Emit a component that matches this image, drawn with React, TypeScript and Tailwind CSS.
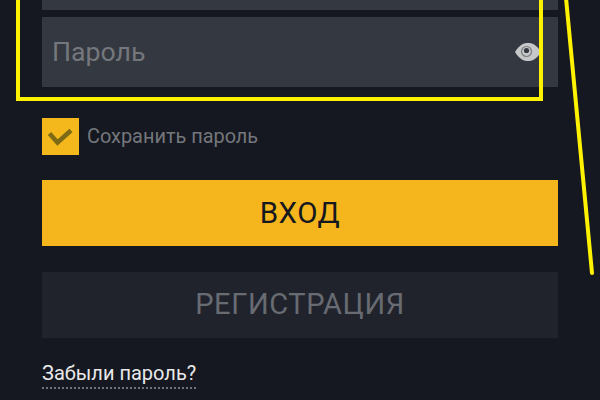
import React, { useState } from 'react';

export default function App() {
  const [remember, setRemember] = useState(true);

  return (
    <div className="relative h-[400px] w-[600px] overflow-hidden bg-[#151820] font-['Roboto',sans-serif]">
      <div className="flex flex-col pl-[42px] pr-[42px]">
        {/* login field, scrolled mostly out of view */}
        <div className="-mt-[60px] h-[70px] bg-[#343840]" />

        <div className="mt-[7px] flex h-[70px] items-center justify-between bg-[#343840] pl-[10px] pr-[16px]">
          <span className="text-[26.7px] text-[#74777c]">Пароль</span>
          <svg viewBox="0 0 28 20" className="h-[20px] w-[28px]">
            <path d="M1 10 C6 2 10 1 14 1 C18 1 22 2 27 10 C22 18 18 19 14 19 C10 19 6 18 1 10 Z" fill="#c6c7c9" />
            <circle cx="12.5" cy="9.5" r="5.6" fill="#7a7d81" />
            <circle cx="12.5" cy="9.5" r="4.4" fill="#c6c7c9" />
            <circle cx="12.5" cy="8.5" r="2.6" fill="#343840" />
          </svg>
        </div>

        <label className="mt-[31px] flex items-center gap-[8px]" onClick={() => setRemember(!remember)}>
          <span className="flex h-[37px] w-[37px] items-center justify-center bg-[#f5b81c]">
            {remember && (
              <svg viewBox="0 0 37 37" className="h-[37px] w-[37px]">
                <path d="M7.5 15.5 L15.5 24.5 L29 12.5" fill="none" stroke="#7d6a14" strokeWidth="4.5" />
              </svg>
            )}
          </span>
          <span className="text-[19.9px] text-[#74777c]">Сохранить пароль</span>
        </label>

        <button className="mt-[25px] h-[66px] bg-[#f5b51c] text-[29.5px] tracking-[0.5px] text-[#15181f]">ВХОД</button>
        <button className="mt-[26px] h-[66px] bg-[#20232c] text-[29px] tracking-[0.6px] text-[#686b72]">РЕГИСТРАЦИЯ</button>

        <div className="mt-[22px]">
          <a className="inline-block border-b-2 border-dotted border-[#6f7277] pb-[1px] text-[20px] leading-[26px] text-[#e9e9ea]">Забыли пароль?</a>
        </div>
      </div>

      {/* annotation drawn over the screenshot */}
      <div className="absolute left-[16px] top-[-20px] h-[121px] w-[527px] border-4 border-[#fff200]" />
      <svg className="absolute left-0 top-0 h-[400px] w-[600px]" viewBox="0 0 600 400">
        <path d="M566 -2 L592 273" stroke="#fff200" strokeWidth="4" strokeLinecap="round" fill="none" />
      </svg>
    </div>
  );
}
